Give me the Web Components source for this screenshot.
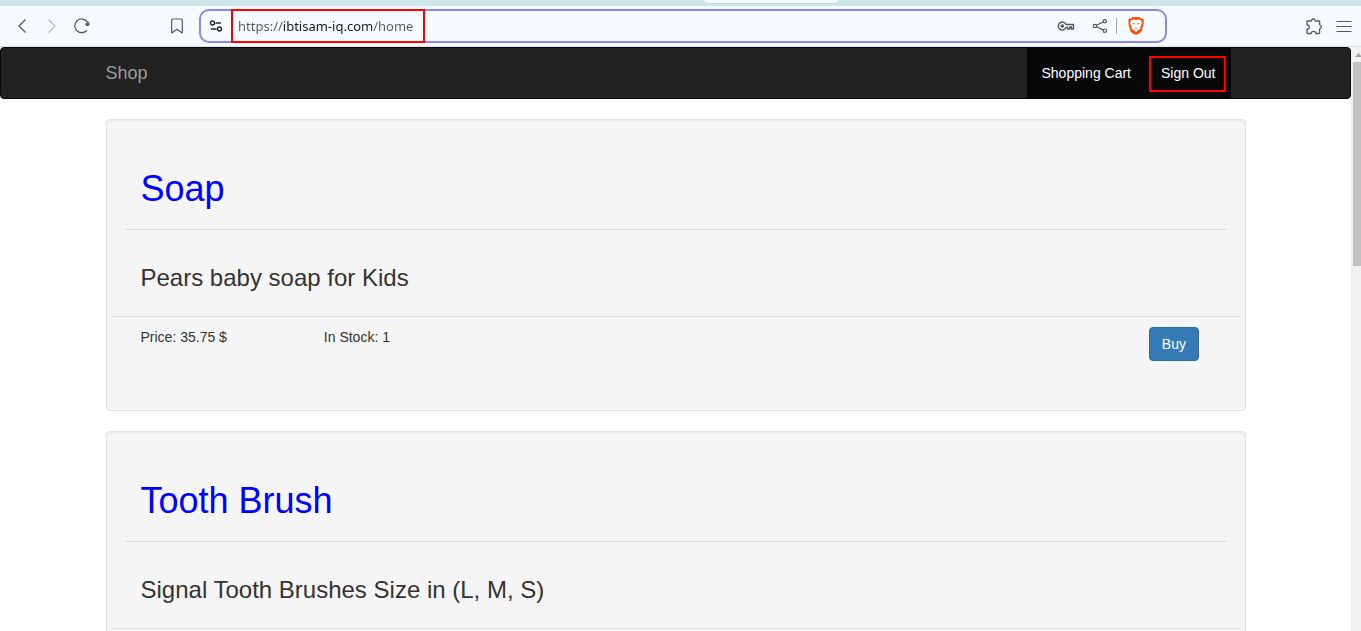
<!DOCTYPE html>
<html lang="en">
<head>
<meta charset="utf-8">
<title>Shop</title>
<style>
  body { margin: 0; font: 14px/20px "Liberation Sans", Arial, sans-serif; color: #333; background: #fff; }
</style>
</head>
<body>
<browser-window>
  <browser-toolbar slot="toolbar" url="https://ibtisam-iq.com/home"></browser-toolbar>
  <shop-navbar brand="Shop">
    <nav-link href="#cart">Shopping Cart</nav-link>
    <nav-link href="#signout" marked>Sign Out</nav-link>
  </shop-navbar>
  <product-list>
    <product-card>
      <span slot="name">Soap</span>
      <span slot="description">Pears baby soap for Kids</span>
      <product-offer slot="offer" price="35.75" stock="1"></product-offer>
    </product-card>
    <product-card>
      <span slot="name">Tooth Brush</span>
      <span slot="description">Signal Tooth Brushes Size in (L, M, S)</span>
    </product-card>
  </product-list>
</browser-window>

<script>
const define = (name, html, setup) => {
  const template = document.createElement('template');
  template.innerHTML = html;
  customElements.define(name, class extends HTMLElement {
    constructor() {
      super();
      this.attachShadow({ mode: 'open' }).append(template.content.cloneNode(true));
    }
    connectedCallback() { if (setup) setup(this, this.shadowRoot); }
  });
};

/* Window: toolbar on top, scrolled page and its scroll bar below */
define('browser-window', `
  <style>
    :host { display: flex; flex-direction: column; height: 100vh; overflow: hidden; }
    .view { display: flex; flex: 1; min-height: 0; }
    main { flex: 1; min-width: 0; overflow: hidden; }
  </style>
  <slot name="toolbar"></slot>
  <div class="view"><main><slot></slot></main><scroll-track></scroll-track></div>
`);

define('scroll-track', `
  <style>
    :host { display: flex; flex-direction: column; width: 10px; overflow: hidden; background: #f1f1f1; }
    svg { display: block; width: 15px; height: 15px; flex: none; }
    .thumb { height: 35%; margin-left: 2px; background: #c1c1c1; }
  </style>
  <svg viewBox="0 0 15 15" aria-hidden="true"><path d="M4 10 7.500 6 11 10z" fill="#a3a3a3"/></svg>
  <div class="thumb"></div>
`);

define('icon-button', `
  <style>
    :host { display: block; flex: none; width: 20px; height: 20px; }
    button { display: block; width: 20px; height: 20px; padding: 0; border: 0; background: none; color: inherit; cursor: pointer; }
    ::slotted(svg) { display: block; width: 20px; height: 20px; }
  </style>
  <button type="button"><slot></slot></button>
`, (el, root) => root.querySelector('button').setAttribute('aria-label', el.getAttribute('label')));

define('browser-toolbar', `
  <style>
    :host { display: block; color: #55595c; }
    .tabs { height: 6px; padding-left: 704px; background: #cfe6eb; }
    .tab { width: 134px; height: 3px; border-radius: 0 0 8px 8px; background: #f4fafb; box-shadow: 0 1px 1px #bfd9df; }
    .bar { display: flex; align-items: center; height: 40px; padding: 0 7px 0 12px; gap: 10px; background: #f5fafd; border-bottom: 1px solid #dbe3e6; }
    .forward { color: #b4b9bc; }
    .bookmark { margin-left: 65px; }
    .address { display: flex; align-items: center; flex: 1; min-width: 0; box-sizing: border-box; height: 34px; margin: 0 127px 0 2px; padding: 0 19px 0 5px; border: 2px solid #8b87ef; border-radius: 10px; }
    .site { color: #24282b; }
    .url { position: relative; width: 180px; margin-left: 5px; padding: 0 7px; }
    .url::after { content: ""; position: absolute; inset: -7px 0; border: 2px solid #f00; pointer-events: none; }
    input { display: block; width: 100%; height: 20px; box-sizing: border-box; padding: 0; border: 0; outline: 0;
      font: 13px/20px "Noto Sans", "Open Sans", sans-serif; color: #3a3e41;
      background: linear-gradient(90deg, #55595c 45px, #15191b 45px 135px, #55595c 135px) text; -webkit-text-fill-color: transparent; }
    .space { flex: 1; }
    .share { margin-left: 14px; }
    .line { width: 1px; height: 16px; margin: 0 9px 0 6px; background: #9da3a6; }
  </style>
  <div class="tabs"><div class="tab"></div></div>
  <div class="bar">
    <icon-button label="Back"><svg viewBox="0 0 20 20" fill="none" stroke="currentColor" stroke-width="1.3"><path d="M13.5 3.5 7 10l6.500 6.500"/></svg></icon-button>
    <icon-button class="forward" label="Forward"><svg viewBox="0 0 20 20" fill="none" stroke="currentColor" stroke-width="1.3"><path d="M6.500 3.500 13 10l-6.500 6.500"/></svg></icon-button>
    <icon-button label="Reload"><svg viewBox="0 0 20 20" fill="none" stroke="currentColor" stroke-width="1.300"><path d="M14.800 14.500A6.900 6.900 0 1 1 15.500 6.100"/><circle cx="15.400" cy="8.200" r="1.900" fill="currentColor" stroke="none"/><path d="M17.300 5.600v3.200h-3z" fill="currentColor" stroke="none"/></svg></icon-button>
    <icon-button class="bookmark" label="Bookmark"><svg viewBox="0 0 20 20" fill="none" stroke="currentColor" stroke-width="1.200" stroke-linejoin="round"><path d="M4.700 4a1 1 0 0 1 1-1h8.600a1 1 0 0 1 1 1v13L10 13.300 4.700 17z"/></svg></icon-button>
    <div class="address">
      <icon-button class="site" label="Site settings"><svg viewBox="0 0 20 20" fill="none" stroke="currentColor" stroke-width="1.400"><circle cx="6.500" cy="7" r="2"/><path d="M9.500 7H15M5 13h5.500"/><circle cx="13.500" cy="13" r="2"/></svg></icon-button>
      <div class="url"><input type="text" aria-label="Address" spellcheck="false"></div>
      <div class="space"></div>
      <icon-button label="Passwords"><svg viewBox="0 0 20 20" fill="none" stroke="currentColor" stroke-width="1.400"><path d="M10 8.500h7.500v4.500h-2v-2h-1.700v2h-2v-1.500H10a4 4 0 1 1 0-3z" stroke-linejoin="round"/><circle cx="6.300" cy="10" r="1.800" fill="currentColor" stroke="none"/></svg></icon-button>
      <icon-button class="share" label="Share"><svg viewBox="0 0 20 20" fill="none" stroke="currentColor" stroke-width="1.200"><circle cx="5" cy="10" r="1.700"/><circle cx="14.800" cy="5.300" r="1.700"/><circle cx="14.800" cy="14.700" r="1.700"/><path d="M6.600 9.200 13.200 6M6.600 10.800l6.600 3.200"/></svg></icon-button>
      <div class="line"></div>
      <icon-button label="Brave Shields"><svg viewBox="0 0 20 20"><path d="M6.500 1h7l1.300 1.500 1.700-.2 1.400 2.200-.6 1.500.4 1.300-2 7.800c-.5 1.300-1.600 2-5.700 3.900-4.100-1.900-5.200-2.600-5.700-3.900l-2-7.800.4-1.300-.6-1.500 1.400-2.200 1.700.2z" fill="#fb5010"/><path d="M7.500 3.500 10 4l2.500-.5 2.300.8 1.200 2.800-1.700 3.900.2 1.500-2.300 1.500L10 16l-2.200-2-2.300-1.500.2-1.500L4 7.100l1.200-2.800z" fill="#fff"/><path d="m6 6.500 2.800 1-.6 1.200zM14 6.500l-2.800 1 .6 1.200zM8.500 11.300l1.500.7 1.500-.7-1.500 1.900z" fill="#fb5010"/></svg></icon-button>
    </div>
    <icon-button label="Extensions"><svg viewBox="0 0 20 20" fill="none" stroke="currentColor" stroke-width="1.300" stroke-linejoin="round"><path d="M3 5h3.800c.3 0 .5-.2.600-.5C7.700 3.400 8.300 3 9.300 3s1.600.4 1.900 1.500c.1.300.3.500.6.500H15c.4 0 .6.200.6.600v2.800c0 .3.200.5.400.6 1 .3 1.400.9 1.400 1.800s-.4 1.500-1.400 1.800c-.2.100-.4.300-.4.600V17c0 .3-.2.500-.6.500h-3.200c0-1.300-.9-2.100-2.300-2.100s-2.300.8-2.300 2.100H3.500c-.3 0-.5-.2-.5-.5v-3.700c1.400 0 2.300-.8 2.300-2.200S4.400 9 3 9z"/></svg></icon-button>
    <icon-button label="Menu"><svg viewBox="0 0 20 20" stroke="currentColor"><path d="M2.500 5.500h15M2.500 10.500h15M2.500 15.500h15"/></svg></icon-button>
  </div>
`, (el, root) => root.querySelector('input').value = el.getAttribute('url'));

define('shop-navbar', `
  <style>
    :host { display: block; margin-bottom: 20px; border: 1px solid #080808; border-radius: 4px; background: #222; }
    nav { display: flex; justify-content: space-between; box-sizing: border-box; max-width: 1170px; margin: 0 auto; padding: 0 30px 0 15px; }
    .brand { padding: 15px 0; font-size: 18px; color: #9d9d9d; text-decoration: none; }
    .links { display: flex; }
  </style>
  <nav><a class="brand" href="#home"></a><div class="links"><slot></slot></div></nav>
`, (el, root) => root.querySelector('.brand').textContent = el.getAttribute('brand'));

define('nav-link', `
  <style>
    :host { display: block; position: relative; background: #080808; }
    a { display: block; padding: 15px; color: #fff; text-decoration: none; }
    :host([marked])::after { content: ""; position: absolute; inset: 8px 5px 6px 3px; border: 2px solid #f00; pointer-events: none; }
  </style>
  <a><slot></slot></a>
`, (el, root) => root.querySelector('a').href = el.getAttribute('href'));

define('product-list', `
  <style>
    :host { display: flex; flex-direction: column; gap: 20px; box-sizing: border-box; max-width: 1170px; margin: 0 auto; padding: 0 15px; }
  </style>
  <slot></slot>
`);

define('product-card', `
  <style>
    :host { display: block; padding: 19px; border: 1px solid #e3e3e3; border-radius: 4px; background: #f5f5f5; box-shadow: inset 0 1px 1px rgba(0, 0, 0, .05); }
    h1, h3 { margin: 0; font-weight: 500; }
    h1 { padding: 30px 15px 20px; border-bottom: 1px solid #ddd; font-size: 36px; line-height: 40px; color: #00f; }
    h3 { padding: 35px 15px 25px; font-size: 24px; line-height: 26px; }
    .offer { margin: 0 -15px; padding: 10px 15px 30px; border-top: 1px solid #ddd; }
  </style>
  <h1><slot name="name"></slot></h1>
  <h3><slot name="description"></slot></h3>
  <div class="offer"><slot name="offer"></slot></div>
`);

define('product-offer', `
  <style>
    :host { display: grid; grid-template-columns: repeat(12, 1fr); align-items: start; }
    div { grid-column: span 2; padding: 0 15px; }
    .buy { grid-column: 12; }
    button { display: block; padding: 6px 12px; border: 1px solid #2e6da4; border-radius: 4px; background: #337ab7; color: #fff; font: inherit; cursor: pointer; }
  </style>
  <div>Price: <span class="price"></span> $</div>
  <div>In Stock: <span class="stock"></span></div>
  <div class="buy"><button type="button">Buy</button></div>
`, (el, root) => {
  root.querySelector('.price').textContent = el.getAttribute('price');
  root.querySelector('.stock').textContent = el.getAttribute('stock');
});
</script>
</body>
</html>
